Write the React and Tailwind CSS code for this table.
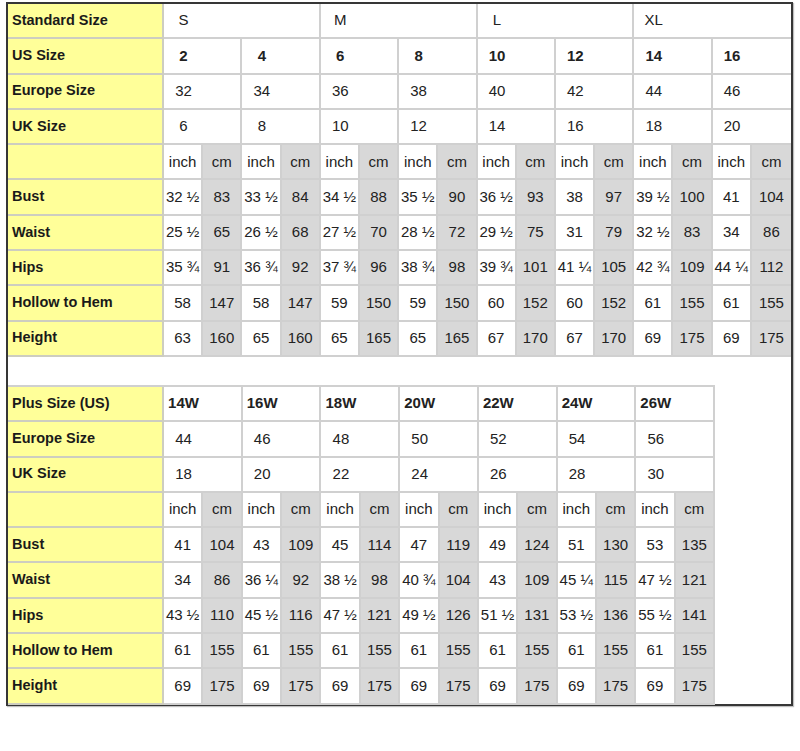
import React from "react";

const F = { fontFamily: '"Liberation Sans", Arial, sans-serif' };

const t1 = {
  std: ["S", "M", "L", "XL"],
  us: ["2", "4", "6", "8", "10", "12", "14", "16"],
  eu: ["32", "34", "36", "38", "40", "42", "44", "46"],
  uk: ["6", "8", "10", "12", "14", "16", "18", "20"],
  rows: [
    ["Bust", ["32 ½", "83", "33 ½", "84", "34 ½", "88", "35 ½", "90", "36 ½", "93", "38", "97", "39 ½", "100", "41", "104"]],
    ["Waist", ["25 ½", "65", "26 ½", "68", "27 ½", "70", "28 ½", "72", "29 ½", "75", "31", "79", "32 ½", "83", "34", "86"]],
    ["Hips", ["35 ¾", "91", "36 ¾", "92", "37 ¾", "96", "38 ¾", "98", "39 ¾", "101", "41 ¼", "105", "42 ¾", "109", "44 ¼", "112"]],
    ["Hollow to Hem", ["58", "147", "58", "147", "59", "150", "59", "150", "60", "152", "60", "152", "61", "155", "61", "155"]],
    ["Height", ["63", "160", "65", "160", "65", "165", "65", "165", "67", "170", "67", "170", "69", "175", "69", "175"]],
  ],
};

const t2 = {
  plus: ["14W", "16W", "18W", "20W", "22W", "24W", "26W"],
  eu: ["44", "46", "48", "50", "52", "54", "56"],
  uk: ["18", "20", "22", "24", "26", "28", "30"],
  rows: [
    ["Bust", ["41", "104", "43", "109", "45", "114", "47", "119", "49", "124", "51", "130", "53", "135"]],
    ["Waist", ["34", "86", "36 ¼", "92", "38 ½", "98", "40 ¾", "104", "43", "109", "45 ¼", "115", "47 ½", "121"]],
    ["Hips", ["43 ½", "110", "45 ½", "116", "47 ½", "121", "49 ½", "126", "51 ½", "131", "53 ½", "136", "55 ½", "141"]],
    ["Hollow to Hem", ["61", "155", "61", "155", "61", "155", "61", "155", "61", "155", "61", "155", "61", "155"]],
    ["Height", ["69", "175", "69", "175", "69", "175", "69", "175", "69", "175", "69", "175", "69", "175"]],
  ],
};

function Label({ children }) {
  return (
    <div className="flex items-center bg-[#ffff99] border-r-2 border-b-2 border-[#cdcdc0] pl-[4px] text-[14.5px] font-bold text-[#1a1a1a] whitespace-nowrap">
      {children}
    </div>
  );
}

function Span({ children, wide, bold, last }) {
  const span = wide ? "col-span-4" : "col-span-2";
  const br = last ? "border-r-0" : "border-r-2";
  return (
    <div className={`${span} ${br} flex items-center border-b-2 border-[#d0d0d0] bg-white`}>
      <div className={`w-[39px] text-center text-[15px] text-[#222] ${bold ? "font-bold" : ""}`}>{children}</div>
    </div>
  );
}

function Cell({ children, cm, last }) {
  const bg = cm ? "bg-[#d8d8d8]" : "bg-white";
  const br = last ? "border-r-0" : "border-r-2";
  return (
    <div className={`${bg} ${br} flex items-center justify-center border-b-2 border-[#d0d0d0] text-[15px] text-[#222] whitespace-nowrap overflow-visible`}>
      {children}
    </div>
  );
}

function UnitRow({ n, lastOpen }) {
  const cells = [];
  for (let i = 0; i < n; i++) {
    cells.push(<Cell key={`i${i}`}>inch</Cell>);
    cells.push(
      <Cell key={`c${i}`} cm last={lastOpen && i === n - 1}>
        cm
      </Cell>
    );
  }
  return (
    <>
      <Label />
      {cells}
    </>
  );
}

export default function App() {
  return (
    <div className="w-[800px] h-[751px] bg-white" style={F}>
      <div className="ml-[6px] mt-[2px] w-[787px] h-[704px] border-2 border-[#363636] bg-white shadow-[1px_1px_1px_rgba(0,0,0,0.25)]">
        <div className="grid grid-cols-[156px_repeat(16,minmax(0,1fr))] auto-rows-[35.3px]">
          <Label>Standard Size</Label>
          {t1.std.map((v, i) => (
            <Span key={v} wide last={i === 3}>
              {v}
            </Span>
          ))}
          <Label>US Size</Label>
          {t1.us.map((v, i) => (
            <Span key={v} bold last={i === 7}>
              {v}
            </Span>
          ))}
          <Label>Europe Size</Label>
          {t1.eu.map((v, i) => (
            <Span key={v} last={i === 7}>
              {v}
            </Span>
          ))}
          <Label>UK Size</Label>
          {t1.uk.map((v, i) => (
            <Span key={v} last={i === 7}>
              {v}
            </Span>
          ))}
          <UnitRow n={8} lastOpen />
          {t1.rows.map(([label, vals]) => (
            <React.Fragment key={label}>
              <Label>{label}</Label>
              {vals.map((v, i) => (
                <Cell key={i} cm={i % 2 === 1} last={i === 15}>
                  {v}
                </Cell>
              ))}
            </React.Fragment>
          ))}
        </div>

        <div className="mt-[28px] w-[707px] grid grid-cols-[156px_repeat(14,minmax(0,1fr))] auto-rows-[35.3px] border-t-2 border-[#d0d0d0]">
          <Label>Plus Size (US)</Label>
          {t2.plus.map((v) => (
            <Span key={v} bold>
              {v}
            </Span>
          ))}
          <Label>Europe Size</Label>
          {t2.eu.map((v) => (
            <Span key={v}>{v}</Span>
          ))}
          <Label>UK Size</Label>
          {t2.uk.map((v) => (
            <Span key={v}>{v}</Span>
          ))}
          <UnitRow n={7} />
          {t2.rows.map(([label, vals]) => (
            <React.Fragment key={label}>
              <Label>{label}</Label>
              {vals.map((v, i) => (
                <Cell key={i} cm={i % 2 === 1}>
                  {v}
                </Cell>
              ))}
            </React.Fragment>
          ))}
        </div>
      </div>
    </div>
  );
}
